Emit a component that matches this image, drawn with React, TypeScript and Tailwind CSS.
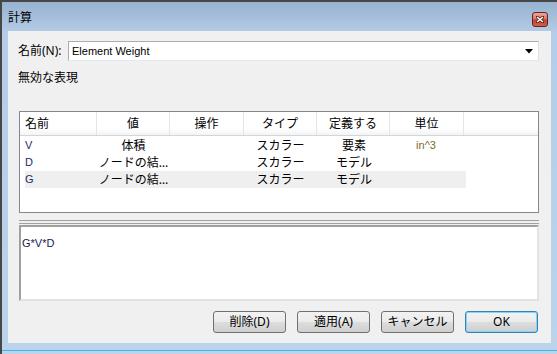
import React from 'react';

interface Row {
    name: string;
    value: string;
    op: string;
    type: string;
    define: string;
    unit: string;
    selected?: boolean;
}

const rows: Row[] = [
    { name: 'V', value: '体積', op: '', type: 'スカラー', define: '要素', unit: 'in^3' },
    { name: 'D', value: 'ノードの結…', op: '', type: 'スカラー', define: 'モデル', unit: '' },
    { name: 'G', value: 'ノードの結…', op: '', type: 'スカラー', define: 'モデル', unit: '', selected: true },
];

const headers = ['値', '操作', 'タイプ', '定義する', '単位'];

const font = { fontFamily: '"Noto Sans", "Noto Sans CJK JP", sans-serif' };
const latin = { fontFamily: '"Liberation Sans", "Noto Sans CJK JP", sans-serif' };

const DialogButton: React.FC<{ label: string; def?: boolean }> = ({ label, def }) => (
    <button
        className={
            def
                ? 'w-[73px] h-[22px] rounded-[3px] border border-[#3c7fb1] shadow-[inset_0_0_0_1px_#7fd6f6] bg-[linear-gradient(to_bottom,#f2f2f2_0%,#ebebeb_50%,#dddddd_51%,#cfcfcf_100%)] text-[12px] text-black'
                : 'w-[73px] h-[22px] rounded-[3px] border border-[#707070] bg-[linear-gradient(to_bottom,#f2f2f2_0%,#ebebeb_50%,#dddddd_51%,#cfcfcf_100%)] text-[12px] text-black'
        }
    >
        {label}
    </button>
);

export default function App() {
    return (
        <div className="w-[557px] h-[354px] overflow-hidden flex flex-col bg-[#474747]" style={font}>
            <div className="h-[2px] shrink-0" />
            <div className="flex-1 ml-[2px] flex flex-col bg-[linear-gradient(to_bottom,#97b2d0_0px,#b6cde7_32px,#bcd3ec_100%)]">
                {/* title bar */}
                <div className="h-[29px] shrink-0 flex items-start justify-between pl-[6px] pr-[9px]">
                    <span className="mt-[9px] text-[12px] leading-[14px] text-black">計算</span>
                    <div className="mt-[10px] w-[16px] h-[15px] rounded-[3px] border border-[#6b2020] bg-[linear-gradient(to_bottom,#e9a99c_0%,#d47764_45%,#c2402f_55%,#d0604b_100%)] flex items-center justify-center">
                        <svg width="8" height="7" viewBox="0 0 8 7">
                            <path d="M1 1 L7 6 M7 1 L1 6" stroke="#5a1a14" strokeWidth="3" strokeLinecap="square" />
                            <path d="M1 1 L7 6 M7 1 L1 6" stroke="#ffffff" strokeWidth="1.6" />
                        </svg>
                    </div>
                </div>

                {/* client area */}
                <div className="h-[312px] shrink-0 mx-[6px] bg-[#f0f0f0] flex flex-col pt-[10px] pl-[10px] pr-[12px]">
                    <div className="flex items-center h-[20px]">
                        <span className="w-[50px] text-[12px] text-black">名前(N):</span>
                        <div className="flex-1 h-[20px] bg-white border border-[#abadb3] border-r-[#dbdfe6] border-b-[#e3e9ef] flex items-center pl-[3px] pr-[5px]">
                            <span className="flex-1 text-[11px] text-black" style={latin}>Element Weight</span>
                            <svg width="8" height="5" viewBox="0 0 8 5">
                                <path d="M0 0 L8 0 L4 4.5 Z" fill="#000" />
                            </svg>
                        </div>
                    </div>

                    <div className="mt-[9px] text-[12px] leading-[16px] text-black">無効な表現</div>

                    {/* table */}
                    <div className="mt-[25px] ml-[1px] h-[102px] border border-[#828790] bg-white flex flex-col">
                        <div className="h-[24px] shrink-0 flex border-b border-[#d5d5d5] bg-[linear-gradient(to_bottom,#ffffff_0%,#ffffff_70%,#f3f4f6_100%)] text-[12px] text-black">
                            <div className="w-[77px] border-r border-[#e5e5e5] pl-[5px] flex items-center">名前</div>
                            {headers.map((h, i) => (
                                <div
                                    key={h}
                                    className={
                                        i === 1 || i === 4
                                            ? 'w-[74px] border-r border-[#e5e5e5] flex items-center justify-center'
                                            : 'w-[73px] border-r border-[#e5e5e5] flex items-center justify-center'
                                    }
                                >
                                    {h}
                                </div>
                            ))}
                            <div className="flex-1" />
                        </div>
                        <div className="pt-[1px] flex flex-col">
                            {rows.map(r => (
                                <div key={r.name} className="flex h-[17px] text-[12px] leading-[17px]">
                                    <div className={r.selected ? 'flex w-[441px] ml-[5px] bg-[#efefef]' : 'flex w-[441px] ml-[5px]'}>
                                        <div className="w-[72px] text-[11px] text-[#1f2a6a]" style={latin}>{r.name}</div>
                                        <div className="w-[73px] text-center text-black">{r.value}</div>
                                        <div className="w-[74px] text-center text-black">{r.op}</div>
                                        <div className="w-[73px] text-center text-black">{r.type}</div>
                                        <div className="w-[74px] text-center text-black">{r.define}</div>
                                        <div className="w-[74px] pr-[4px] text-center text-[11px] text-[#7d6b1e]" style={latin}>{r.unit}</div>
                                    </div>
                                </div>
                            ))}
                        </div>
                    </div>

                    {/* splitter */}
                    <div className="ml-[1px] h-[12px] flex flex-col justify-end gap-[2px] pb-[1px]">
                        <div className="h-[1px] bg-[#a0a0a0]" />
                        <div className="h-[1px] bg-[#a0a0a0]" />
                    </div>

                    {/* expression box */}
                    <div className="ml-[1px] h-[76px] bg-white border-2 border-t-[#a0a0a0] border-l-[#a0a0a0] border-r-[#e3e3e3] border-b-[#e3e3e3] pl-[1px] pt-[2px]">
                        <span className="text-[11px] leading-[13px] text-[#1a1a50]" style={latin}>G*V*D</span>
                    </div>

                    {/* buttons */}
                    <div className="mt-[10px] flex justify-end gap-[11px] pr-[1px]">
                        <DialogButton label="削除(D)" />
                        <DialogButton label="適用(A)" />
                        <DialogButton label="キャンセル" />
                        <DialogButton label="OK" def />
                    </div>
                </div>

                {/* bottom frame */}
                <div className="h-[7px] shrink-0" />
                <div className="h-[1px] shrink-0 bg-[#3fb6e6]" />
            </div>
        </div>
    );
}
